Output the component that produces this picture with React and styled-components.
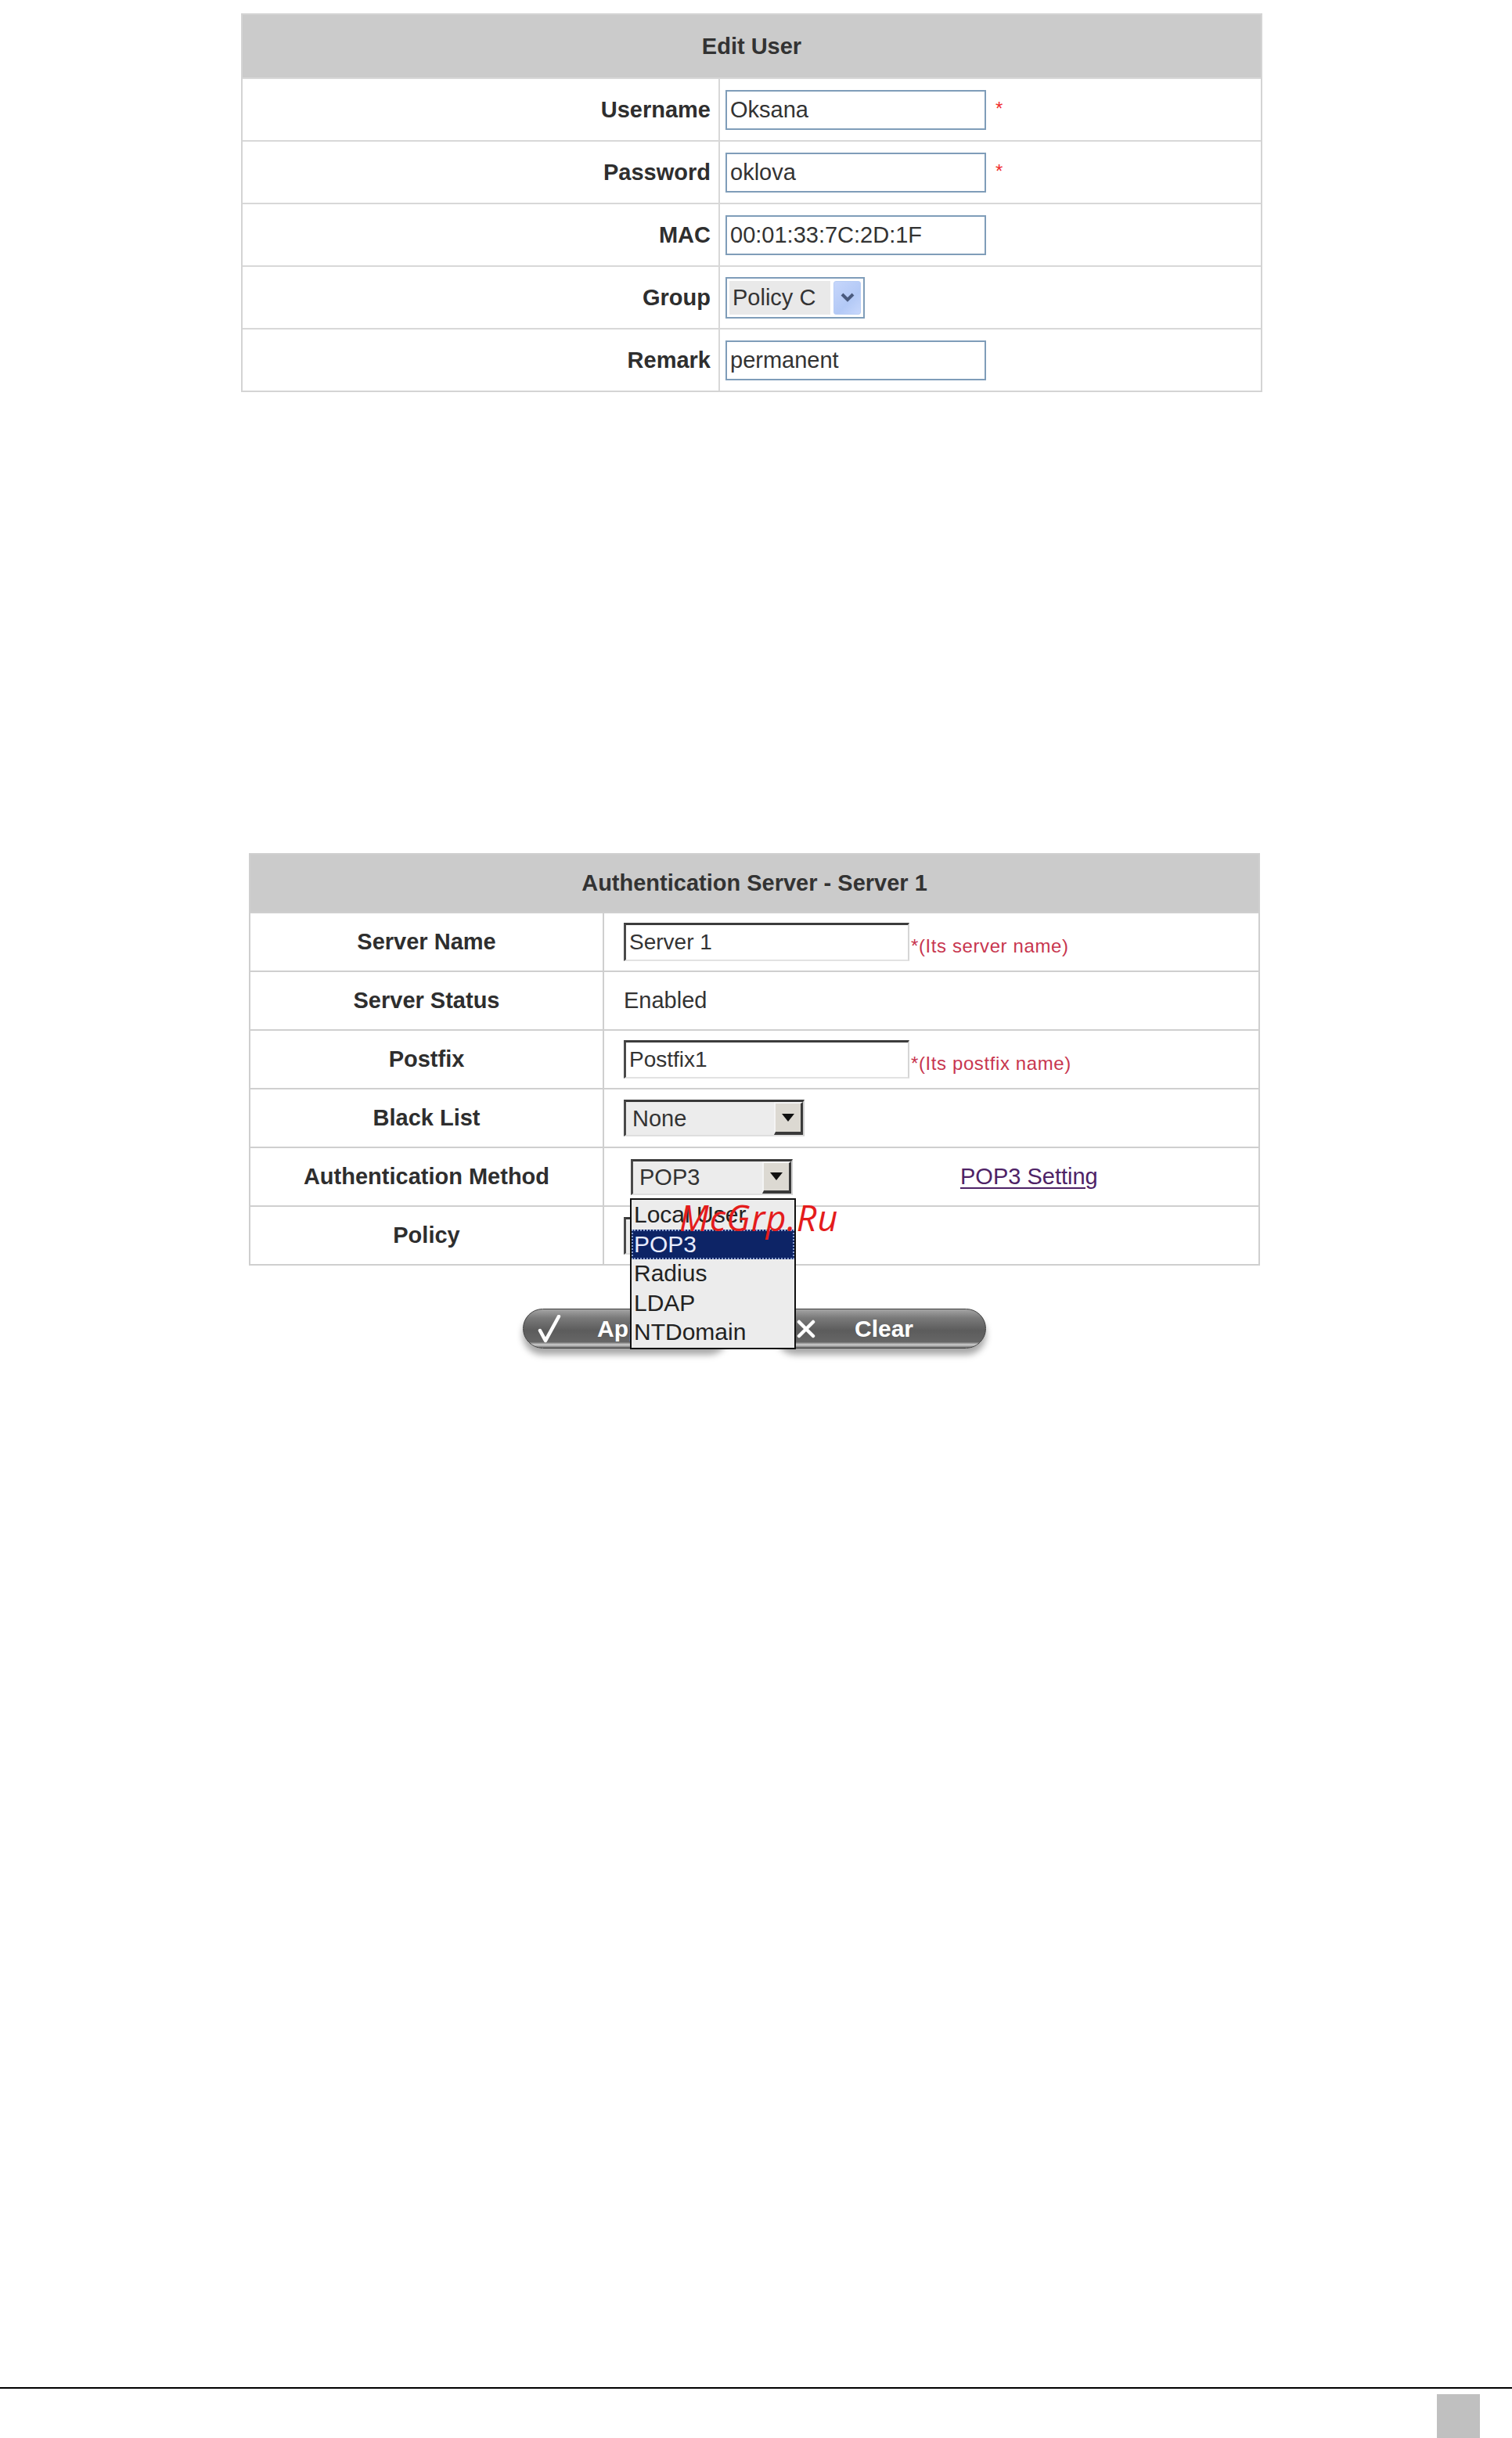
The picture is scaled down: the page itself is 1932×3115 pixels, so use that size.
import React from "react";
import styled, { createGlobalStyle } from "styled-components";

const Global = createGlobalStyle`
  html, body { margin: 0; padding: 0; background: #ffffff; }
  #root { width: 1932px; }
  * { box-sizing: border-box; }
`;

const FONT = `"Liberation Sans", Arial, sans-serif`;

const Page = styled.div`
  display: flex;
  flex-direction: column;
  min-height: 3115px;
  padding-top: 17px;
  font-family: ${FONT};
`;

const Panel = styled.section`
  margin-left: ${(p) => p.$left}px;
  margin-top: ${(p) => p.$top}px;
  width: ${(p) => p.$width}px;
  border: 2px solid ${(p) => p.$line};
  background: #ffffff;
`;

const PanelHeader = styled.div`
  height: ${(p) => p.$h}px;
  background: #cbcbcb;
  display: flex;
  align-items: center;
  justify-content: center;
  font: bold 29px ${FONT};
  color: #333333;
`;

const FormRow = styled.div`
  display: grid;
  grid-template-columns: ${(p) => p.$labelW}px 1fr;
  height: ${(p) => p.$h}px;
  border-top: 2px solid ${(p) => p.$line};
`;

const Label = styled.div`
  display: flex;
  align-items: center;
  justify-content: ${(p) => p.$align};
  padding-right: ${(p) => p.$pr || 0}px;
  font: bold 29px ${FONT};
  color: #2e2e2e;
`;

const Value = styled.div`
  position: relative;
  display: flex;
  align-items: center;
  border-left: 2px solid ${(p) => p.$line};
  padding-left: ${(p) => p.$pl}px;
  font: 29px ${FONT};
  color: #333333;
`;

const XPInput = styled.input`
  width: 333px;
  height: 51px;
  border: 2px solid #7f9db9;
  padding: 0 4px;
  font: 29px ${FONT};
  color: #333333;
  background: #ffffff;
  outline: none;
`;

const Required = styled.span`
  margin-left: 12px;
  color: #f03030;
  font: 24px ${FONT};
  align-self: center;
  margin-top: -2px;
`;

const XPSelect = styled.div`
  display: flex;
  width: 178px;
  height: 53px;
  border: 2px solid #7f9db9;
  padding: 3px;
  gap: 4px;
  background: #ffffff;
`;

const XPSelectText = styled.div`
  flex: 1;
  background: #e9e9e9;
  display: flex;
  align-items: center;
  padding-left: 4px;
  font: 29px ${FONT};
  color: #333333;
`;

const XPArrow = styled.div`
  width: 35px;
  border-radius: 3px;
  background: linear-gradient(135deg, #c6d6fb 0%, #b3c9f6 60%, #c8d8fc 100%);
  border: 1px solid #b8cdf5;
  display: flex;
  align-items: center;
  justify-content: center;
`;

const ClassicInput = styled.input`
  width: 365px;
  height: 49px;
  border-style: solid;
  border-width: 3px 2px 2px 3px;
  border-color: #3c3c3c #d6d6d6 #e2e2e2 #4a4a4a;
  padding: 0 4px;
  font: 28px ${FONT};
  color: #333333;
  background: #ffffff;
  outline: none;
`;

const Hint = styled.span`
  align-self: flex-end;
  margin: 0 0 17px 2px;
  font: 24px ${FONT};
  letter-spacing: 0.6px;
  color: #c8364f;
`;

const ClassicSelect = styled.div`
  display: flex;
  width: ${(p) => p.$width}px;
  height: ${(p) => p.$h}px;
  border-style: solid;
  border-width: 3px 2px 2px 3px;
  border-color: #3a3a3a #cfcfcf #dedede #4a4a4a;
  background: #ececec;
`;

const ClassicText = styled.div`
  flex: 1;
  display: flex;
  align-items: center;
  padding-left: 8px;
  font: 29px ${FONT};
  color: #333333;
`;

const ClassicArrow = styled.div`
  width: 37px;
  background: #dcd9d2;
  border-style: solid;
  border-width: 2px 3px 4px 2px;
  border-color: #f4f4f4 #3a3a3a #3a3a3a #f4f4f4;
  display: flex;
  align-items: center;
  justify-content: center;
`;

const Triangle = styled.span`
  width: 0;
  height: 0;
  border-left: 8px solid transparent;
  border-right: 8px solid transparent;
  border-top: 10px solid #111111;
`;

const PlainText = styled.span`
  font: 29px ${FONT};
  color: #333333;
`;

const SettingLink = styled.a`
  margin-left: 214px;
  font: 29px ${FONT};
  color: #4e2266;
  text-decoration: underline;
  text-underline-offset: 4px;
  cursor: pointer;
`;

const SelectWrap = styled.div`
  position: relative;
  margin-left: 9px;
`;

const DropList = styled.ul`
  position: absolute;
  left: -1px;
  top: 50px;
  width: 212px;
  margin: 0;
  padding: 1px 0;
  list-style: none;
  background: #ececec;
  border: 2px solid #111111;
  z-index: 5;
`;

const DropItem = styled.li`
  height: 37.5px;
  display: flex;
  align-items: center;
  padding-left: 3px;
  font: 30px ${FONT};
  color: ${(p) => (p.$active ? "#e8ecff" : "#222222")};
  background: ${(p) => (p.$active ? "#0d2466" : "transparent")};
  outline: ${(p) => (p.$active ? "2px dotted #8aa0d0" : "none")};
  outline-offset: -2px;
`;

const Watermark = styled.span`
  position: absolute;
  left: 62px;
  top: 44px;
  font: italic 45px "Open Sans", "DejaVu Sans", sans-serif;
  letter-spacing: 1px;
  color: #e41c1c;
  white-space: nowrap;
  z-index: 6;
  pointer-events: none;
`;

const ButtonBar = styled.div`
  display: flex;
  justify-content: center;
  gap: 60px;
  margin-top: 55px;
  width: 1292px;
  margin-left: 318px;
`;

const PillButton = styled.button`
  width: ${(p) => p.$width}px;
  height: 51px;
  border-radius: 26px;
  border: 1px solid #3e3e3e;
  background: linear-gradient(
    to bottom,
    #a4a4a4 0%,
    #7a7a7a 22%,
    #5c5c5c 55%,
    #666666 85%,
    #d0d0d0 92%,
    #6a6a6a 100%
  );
  box-shadow: 0 8px 8px rgba(0, 0, 0, 0.35);
  display: flex;
  align-items: center;
  padding: 0 0 0 ${(p) => p.$pl}px;
  gap: ${(p) => p.$gap}px;
  font: bold 30px ${FONT};
  color: #ffffff;
  cursor: pointer;
`;

const Footer = styled.footer`
  margin-top: auto;
  height: 65px;
  border-top: 2px solid #000000;
  display: flex;
  justify-content: flex-end;
  padding: 7px 41px 0 0;
`;

const PageMarker = styled.div`
  width: 55px;
  height: 56px;
  background: #c0c0c0;
`;

const Chevron = () => (
  <svg width="18" height="12" viewBox="0 0 18 12">
    <path d="M2 2 L9 9 L16 2" fill="none" stroke="#4a5a7e" strokeWidth="4" />
  </svg>
);

const CheckIcon = () => (
  <svg width="30" height="36" viewBox="0 0 30 36">
    <path d="M3 20 L10 33 L27 2" fill="none" stroke="#ffffff" strokeWidth="4.5" strokeLinecap="round" strokeLinejoin="round" />
  </svg>
);

const CrossIcon = () => (
  <svg width="24" height="24" viewBox="0 0 24 24">
    <path d="M3 3 L21 21 M21 3 L3 21" fill="none" stroke="#ffffff" strokeWidth="4.5" strokeLinecap="round" />
  </svg>
);

const L1 = "#d8d8d8";
const L2 = "#cfcfcf";

const editRows = [
  { label: "Username", value: "Oksana", required: true },
  { label: "Password", value: "oklova", required: true },
  { label: "MAC", value: "00:01:33:7C:2D:1F" },
  { label: "Group", select: "Policy C" },
  { label: "Remark", value: "permanent" },
];

const methods = ["Local User", "POP3", "Radius", "LDAP", "NTDomain"];

export default function App() {
  return (
    <>
      <Global />
      <Page>
        <Panel $left={308} $top={0} $width={1305} $line="#d4d4d4">
          <PanelHeader $h={80}>Edit User</PanelHeader>
          {editRows.map((r) => (
            <FormRow key={r.label} $labelW={608} $h={80} $line={L1}>
              <Label $align="flex-end" $pr={10}>{r.label}</Label>
              <Value $line={L1} $pl={7}>
                {r.select ? (
                  <XPSelect>
                    <XPSelectText>{r.select}</XPSelectText>
                    <XPArrow>
                      <Chevron />
                    </XPArrow>
                  </XPSelect>
                ) : (
                  <XPInput readOnly value={r.value} />
                )}
                {r.required && <Required>*</Required>}
              </Value>
            </FormRow>
          ))}
        </Panel>

        <Panel $left={318} $top={589} $width={1292} $line={L2}>
          <PanelHeader $h={73}>Authentication Server - Server 1</PanelHeader>

          <FormRow $labelW={450} $h={75} $line={L2}>
            <Label $align="center">Server Name</Label>
            <Value $line={L2} $pl={25}>
              <ClassicInput readOnly value="Server 1" />
              <Hint>*(Its server name)</Hint>
            </Value>
          </FormRow>

          <FormRow $labelW={450} $h={75} $line={L2}>
            <Label $align="center">Server Status</Label>
            <Value $line={L2} $pl={25}>
              <PlainText>Enabled</PlainText>
            </Value>
          </FormRow>

          <FormRow $labelW={450} $h={75} $line={L2}>
            <Label $align="center">Postfix</Label>
            <Value $line={L2} $pl={25}>
              <ClassicInput readOnly value="Postfix1" />
              <Hint>*(Its postfix name)</Hint>
            </Value>
          </FormRow>

          <FormRow $labelW={450} $h={75} $line={L2}>
            <Label $align="center">Black List</Label>
            <Value $line={L2} $pl={25}>
              <ClassicSelect $width={231} $h={47}>
                <ClassicText>None</ClassicText>
                <ClassicArrow>
                  <Triangle />
                </ClassicArrow>
              </ClassicSelect>
            </Value>
          </FormRow>

          <FormRow $labelW={450} $h={75} $line={L2}>
            <Label $align="center">Authentication Method</Label>
            <Value $line={L2} $pl={25}>
              <SelectWrap>
                <ClassicSelect $width={207} $h={46}>
                  <ClassicText>POP3</ClassicText>
                  <ClassicArrow>
                    <Triangle />
                  </ClassicArrow>
                </ClassicSelect>
                <DropList>
                  {methods.map((m) => (
                    <DropItem key={m} $active={m === "POP3"}>
                      {m}
                    </DropItem>
                  ))}
                </DropList>
                <Watermark>McGrp.Ru</Watermark>
              </SelectWrap>
              <SettingLink>POP3 Setting</SettingLink>
            </Value>
          </FormRow>

          <FormRow $labelW={450} $h={75} $line={L2}>
            <Label $align="center">Policy</Label>
            <Value $line={L2} $pl={25}>
              <ClassicSelect $width={212} $h={48}>
                <ClassicText>Policy 1</ClassicText>
                <ClassicArrow>
                  <Triangle />
                </ClassicArrow>
              </ClassicSelect>
            </Value>
          </FormRow>
        </Panel>

        <ButtonBar>
          <PillButton $width={263} $pl={18} $gap={46}>
            <CheckIcon />
            Apply
          </PillButton>
          <PillButton $width={269} $pl={26} $gap={50}>
            <CrossIcon />
            Clear
          </PillButton>
        </ButtonBar>

        <Footer>
          <PageMarker />
        </Footer>
      </Page>
    </>
  );
}
